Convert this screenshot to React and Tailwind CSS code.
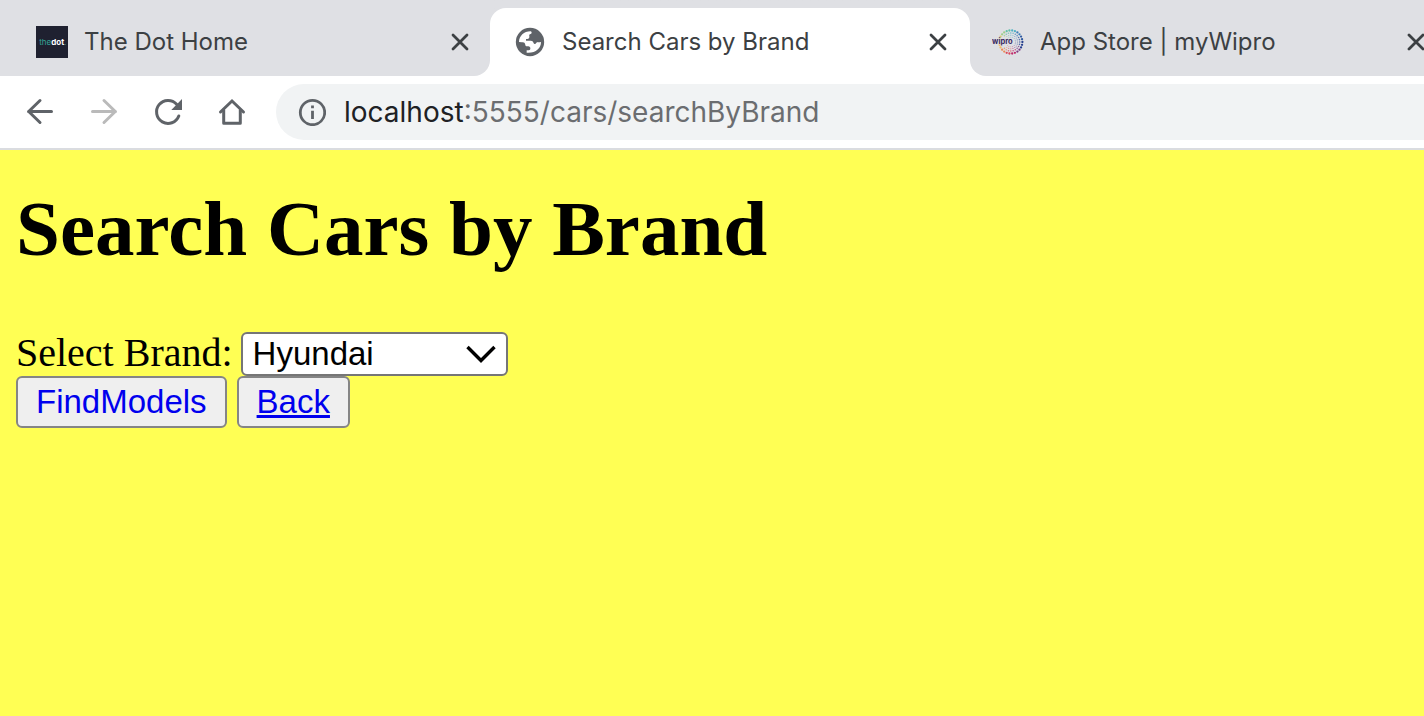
import { useState } from "react";

function CloseIcon() {
  return (
    <svg viewBox="0 0 32 32" className="size-8" fill="none" stroke="#3c4043" strokeWidth="2.8" strokeLinecap="round">
      <path d="M9 9l14 14M23 9L9 23" />
    </svg>
  );
}

function DotIcon() {
  return (
    <svg viewBox="0 0 32 32" className="size-8 shrink-0" aria-hidden="true">
      <rect width="32" height="32" fill="#1f2130" />
      <text x="3.2" y="18.6" fontSize="8" fontFamily="Inter, sans-serif" fill="#35a497">
        the
        <tspan fill="#ffffff" fontWeight="700">dot</tspan>
        <tspan>.</tspan>
      </text>
    </svg>
  );
}

function GlobeIcon() {
  return (
    <svg viewBox="42 24 96 96" className="size-8 shrink-0" aria-hidden="true">
      <circle cx="90" cy="72" r="42.5" fill="#5f6368" />
      <path
        fill="#ffffff"
        d="M57 72C57 53 73 39 92 39.5C96 40 96 46 92 48C88 49 87 51 88 55C89 60 86 63 82 63H78V68H92C98 68 100 72 101 76C103 80 107 78 109 74C111 72 117 73 123 72C123 91 107 106 80 104V97H86C90 97 91 94 91 91C91 88 89 86 85 85H79C76 84 76 80 75 77C73 73 70 73 66 73Z"
      />
    </svg>
  );
}

const wheelColors = ["#27408f", "#7b3b85", "#c02a6b", "#dc4a5a", "#ec8a54", "#f3bd62", "#dccb6d", "#9ccf8a", "#62c0a8", "#4fb0c4", "#3b7fb8", "#2f5aa0"];

function WiproIcon() {
  const rings = [
    { r: 11.6, n: 26, s: 1.15, o: 1 },
    { r: 9, n: 24, s: 0.8, o: 0.75 },
    { r: 6.8, n: 20, s: 0.6, o: 0.6 },
    { r: 4.8, n: 16, s: 0.5, o: 0.5 },
  ];
  return (
    <svg viewBox="0 0 32 32" className="size-8 shrink-0" aria-hidden="true">
      {rings.flatMap((g) =>
        Array.from({ length: g.n }, (_, i) => {
          const a = (i / g.n) * 2 * Math.PI;
          if (g.r < 11 && Math.cos(a) < -0.8) return null;
          return (
            <circle
              key={`${g.r}-${i}`}
              cx={18.8 + g.r * Math.cos(a)}
              cy={16 + g.r * Math.sin(a)}
              r={g.s}
              opacity={g.o}
              fill={wheelColors[Math.floor((i / g.n) * wheelColors.length)]}
            />
          );
        })
      )}
      <rect x="0" y="12.5" width="20" height="6" fill="#dfe0e4" opacity="0.8" />
      <text x="0" y="18" fontSize="7.5" fontWeight="700" fontFamily="Inter, sans-serif" fill="#38285f">
        wipro
      </text>
    </svg>
  );
}

function TabContent({ icon, title }) {
  return (
    <>
      <a href="#tab" className="flex min-w-0 flex-1 items-center gap-4 text-[#3c4043]">
        {icon}
        <span className="truncate">{title}</span>
      </a>
      <button type="button" aria-label={`Close ${title}`} className="shrink-0">
        <CloseIcon />
      </button>
    </>
  );
}

function ToolButton({ label, color = "#5f6368", children }) {
  return (
    <button type="button" aria-label={label} className="shrink-0">
      <svg viewBox="0 0 32 32" className="size-8" fill="none" stroke={color} strokeWidth="3" strokeLinecap="round" strokeLinejoin="round">
        {children}
      </svg>
    </button>
  );
}

function TabStrip() {
  return (
    <nav className="flex h-19 overflow-hidden bg-white font-[Inter,sans-serif] text-[24px]">
      <div className="flex w-[490px] shrink-0 items-center rounded-br-2xl bg-[#dfe0e4] pt-2 pr-[14px] pl-9">
        <TabContent icon={<DotIcon />} title="The Dot Home" />
      </div>
      <div className="flex w-[480px] shrink-0 bg-linear-to-b from-[#dfe0e4] from-50% to-white to-50% pt-2">
        <div className="flex flex-1 items-center rounded-t-2xl bg-white pr-4 pl-6">
          <TabContent icon={<GlobeIcon />} title="Search Cars by Brand" />
        </div>
      </div>
      <div className="flex w-[480px] shrink-0 items-center rounded-bl-2xl bg-[#dfe0e4] pt-2 pr-[18px] pl-[22px]">
        <TabContent icon={<WiproIcon />} title="App Store | myWipro" />
      </div>
    </nav>
  );
}

function Toolbar() {
  return (
    <div className="flex items-center border-b-2 border-[#dadce0] bg-white py-2 pl-6">
      <div className="flex gap-8">
        <ToolButton label="Back">
          <path d="M27.5 15.5H4.5M16 4.5l-11.3 11L16 26.5" />
        </ToolButton>
        <ToolButton label="Forward" color="#bababa">
          <path d="M4.5 15.5H27.5M16 4.5l11.3 11L16 26.5" />
        </ToolButton>
        <ToolButton label="Reload">
          <path d="M26.8 20A11.5 11.5 0 1 1 24.6 8.2" />
          <path d="M30 3V14H19.3Z" fill="#5f6368" stroke="none" />
        </ToolButton>
        <ToolButton label="Home">
          <path strokeLinejoin="miter" d="M4.5 16L16 5L27.5 16" />
          <path d="M7.7 14V27.3H24.3V14" />
        </ToolButton>
      </div>
      <div className="ml-7 flex h-14 min-w-0 flex-1 items-center gap-[18px] rounded-l-full bg-[#f1f3f4] pl-[22px]">
        <svg viewBox="0 0 28 28" className="size-7 shrink-0" fill="none" stroke="#5f6368" strokeWidth="2.8" aria-hidden="true">
          <circle cx="14.5" cy="14.5" r="12.2" />
          <path d="M14.5 12.8V21M14.5 7.5V10.3" />
        </svg>
        <label className="flex min-w-0 flex-1 font-[Inter,sans-serif] text-[28px] text-[#202124]">
          localhost
          <input
            type="text"
            aria-label="Address"
            defaultValue=":5555/cars/searchByBrand"
            className="min-w-0 flex-1 bg-transparent text-[#6b6d70] outline-none"
          />
        </label>
      </div>
    </div>
  );
}

function SearchPage() {
  const [brand, setBrand] = useState("Hyundai");
  const button =
    "rounded-md border-2 border-[#858585] bg-[#efefef] px-[18px] font-['Liberation_Sans',sans-serif] text-[33px] leading-12 text-[#0000ee]";
  return (
    <main className="flex-1 bg-[#ffff54] px-4 pt-8 font-['Liberation_Serif',serif] text-black">
      <h1 className="text-[79px] leading-[94px] font-bold">Search Cars by Brand</h1>
      <form className="pt-14" onSubmit={(e) => e.preventDefault()}>
        <div className="flex gap-2">
          <label htmlFor="brand" className="text-[40px] leading-[42px]">
            Select Brand:
          </label>
          <div className="relative">
            <select
              id="brand"
              value={brand}
              onChange={(e) => setBrand(e.target.value)}
              className="block h-11 w-[267px] appearance-none rounded-md border-2 border-[#767676] bg-white pr-12 pl-[10px] font-['Liberation_Sans',sans-serif] text-[33px] leading-10"
            >
              <option>Hyundai</option>
            </select>
            <svg
              viewBox="0 0 30 20"
              className="pointer-events-none absolute top-3 right-3 h-5 w-[30px]"
              fill="none"
              stroke="#000000"
              strokeWidth="3.4"
              aria-hidden="true"
            >
              <path d="M1.5 3L15 16.5L28.5 3" />
            </svg>
          </div>
        </div>
        <div className="flex gap-[10px]">
          <button type="submit" className={button}>
            FindModels
          </button>
          <a href="#back" className={`${button} underline`}>
            Back
          </a>
        </div>
      </form>
    </main>
  );
}

export default function App() {
  return (
    <div className="flex min-h-screen flex-col">
      <TabStrip />
      <Toolbar />
      <SearchPage />
    </div>
  );
}
